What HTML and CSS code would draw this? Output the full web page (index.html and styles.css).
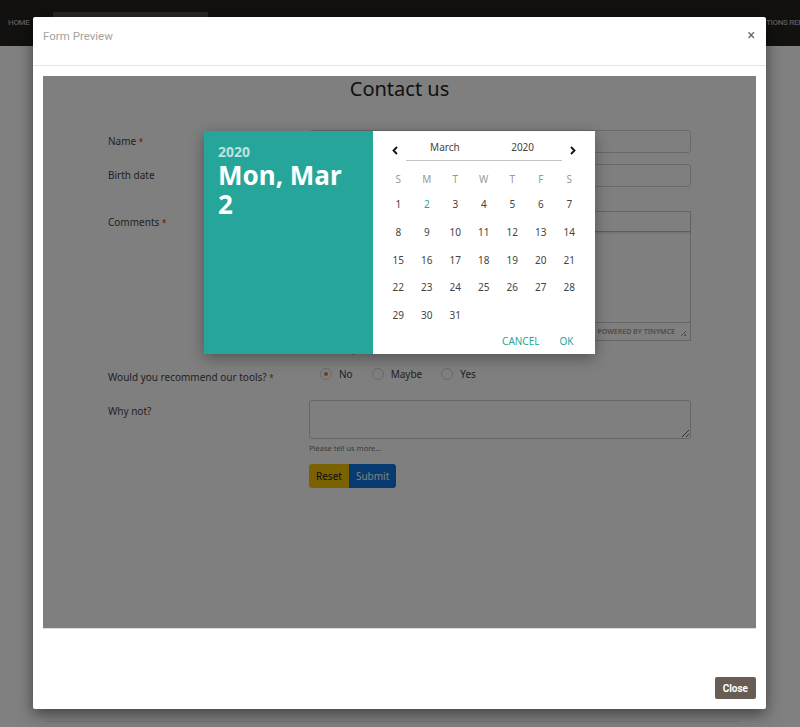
FILE: index.html
```html
<!DOCTYPE html>
<html lang="en">
<head>
    <meta charset="UTF-8">
    <meta name="viewport" content="width=device-width, initial-scale=1.0">
    <title>Form Preview</title>
    <link rel="stylesheet" href="styles.css">
</head>
<body>
    <header class="topnav">
      <a class="nav-link" href="#">Home</a>
      <div class="nav-search"></div>
      <a class="nav-link nav-link-end" href="#">Options Reference</a>
    </header>
    <main class="page"></main>

    <div class="modal">
      <div class="modal-header">
        <h4 class="modal-title">Form Preview</h4>
        <button class="modal-x" type="button">&times;</button>
      </div>
      <div class="modal-body">
        <div class="preview">
          <h2 class="form-title">Contact us</h2>
          <form class="form">
            <div class="row">
              <label class="label">Name <span class="req">*</span></label>
              <div class="field"><input class="input" type="text"></div>
            </div>
            <div class="row row-spaced">
              <label class="label">Birth date</label>
              <div class="field"><input class="input" type="text"></div>
            </div>
            <div class="row">
              <label class="label">Comments <span class="req">*</span></label>
              <div class="field">
                <div class="editor">
                  <div class="editor-toolbar"></div>
                  <div class="editor-body"></div>
                  <div class="editor-status">
                    <span>Powered by Tinymce</span>
                    <span class="grip"></span>
                  </div>
                </div>
                <p class="help">Tell us what you think</p>
              </div>
            </div>
            <div class="row">
              <label class="label">Would you recommend our tools? <span class="req">*</span></label>
              <div class="field">
                <div class="radios">
                  <span class="radio"><span class="dot checked"></span>No</span>
                  <span class="radio"><span class="dot"></span>Maybe</span>
                  <span class="radio"><span class="dot"></span>Yes</span>
                </div>
              </div>
            </div>
            <div class="row">
              <label class="label">Why not?</label>
              <div class="field">
                <textarea class="textarea"></textarea>
                <p class="help">Please tell us more...</p>
              </div>
            </div>
            <div class="row">
              <span></span>
              <div class="btn-group">
                <button class="btn btn-reset" type="reset">Reset</button>
                <button class="btn btn-submit" type="button">Submit</button>
              </div>
            </div>
          </form>

          <div class="picker-overlay"></div>
          <div class="picker">
            <div class="picker-date">
              <div class="picker-year">2020</div>
              <div class="picker-day">Mon, Mar 2</div>
            </div>
            <div class="picker-cal">
              <div class="cal-head">
                <span class="cal-nav">
                  <svg width="6" height="9" viewBox="0 0 6 9"><polyline points="5,1 1.5,4.5 5,8" fill="none" stroke="#111" stroke-width="1.8"/></svg>
                </span>
                <div class="cal-selects">
                  <span>March</span>
                  <span>2020</span>
                </div>
                <span class="cal-nav">
                  <svg width="6" height="9" viewBox="0 0 6 9"><polyline points="1,1 4.5,4.5 1,8" fill="none" stroke="#111" stroke-width="1.8"/></svg>
                </span>
              </div>
              <div class="cal-week">
                <span>S</span><span>M</span><span>T</span><span>W</span><span>T</span><span>F</span><span>S</span>
              </div>
              <div class="cal-days">
                <span>1</span><span class="today">2</span><span>3</span><span>4</span><span>5</span><span>6</span><span>7</span>
                <span>8</span><span>9</span><span>10</span><span>11</span><span>12</span><span>13</span><span>14</span>
                <span>15</span><span>16</span><span>17</span><span>18</span><span>19</span><span>20</span><span>21</span>
                <span>22</span><span>23</span><span>24</span><span>25</span><span>26</span><span>27</span><span>28</span>
                <span>29</span><span>30</span><span>31</span>
              </div>
              <div class="cal-foot">
                <button class="cal-btn" type="button">Cancel</button>
                <button class="cal-btn" type="button">Ok</button>
              </div>
            </div>
          </div>
        </div>
      </div>
      <div class="modal-footer">
        <button class="btn-close" type="button">Close</button>
      </div>
    </div>
</body>
</html>
```

FILE: styles.css
```css
html {
  box-sizing: border-box;
}

*,
*:before,
*:after {
  box-sizing: inherit;
}

body {
  margin: 0;
  height: 727px;
  overflow: hidden;
  background: #808080;
  font-family: "Noto Sans", "Open Sans", Arial, sans-serif;
}

button {
  font-family: inherit;
  border: 0;
  background: none;
  padding: 0;
  cursor: pointer;
}

/* page behind the modal (already dimmed by the backdrop) */
.topnav {
  height: 46px;
  background: #121110;
  display: flex;
  align-items: flex-start;
  padding-left: 8px;
  overflow: hidden;
}
.nav-link {
  margin-top: 18px;
  font-family: Roboto, sans-serif;
  font-size: 8px;
  font-weight: 500;
  letter-spacing: -0.3px;
  color: #5f5c5a;
  text-decoration: none;
  text-transform: uppercase;
  white-space: nowrap;
}
.nav-search {
  width: 155px;
  height: 30px;
  margin: 12px 0 0 23px;
  background: #2a2826;
}
.nav-link-end {
  margin-left: auto;
  margin-right: -30px;
}

.page {
  height: 676px;
  margin: 0 60px 0 45px;
  border-bottom: 1px solid #777;
}

/* modal */
.modal {
  position: absolute;
  top: 17px;
  left: 33px;
  width: 733px;
  height: 692px;
  background: #fff;
  border-radius: 2px;
  box-shadow: 0 5px 15px rgba(0, 0, 0, 0.5);
  display: flex;
  flex-direction: column;
}
.modal-header {
  height: 49px;
  padding: 10px 10px 0;
  border-bottom: 1px solid #e5e5e5;
  display: flex;
  justify-content: space-between;
  align-items: flex-start;
}
.modal-title {
  margin: 0;
  font-family: Roboto, sans-serif;
  font-size: 11.5px;
  font-weight: 400;
  line-height: 18px;
  color: #a6a29e;
}
.modal-x {
  font-family: Roboto, sans-serif;
  font-size: 14px;
  line-height: 16px;
  color: #666;
  margin-right: 1px;
}
.modal-body {
  padding: 10px;
}
.modal-footer {
  flex: 1;
  display: flex;
  justify-content: flex-end;
  align-items: flex-end;
  padding: 10px;
}
.btn-close {
  height: 22px;
  padding: 0 8px;
  border-radius: 2px;
  background: #675d55;
  color: #fff;
  font-family: Roboto, sans-serif;
  font-size: 10px;
  font-weight: 700;
}

/* form preview */
.preview {
  position: relative;
  height: 553px;
  background: #fff;
  border-bottom: 1px solid #ddd;
  overflow: hidden;
  color: #444;
}
.form-title {
  margin: 0 0 28px;
  text-align: center;
  font-size: 20px;
  font-weight: 400;
  line-height: 26px;
  color: #222;
}
.form {
  padding: 0 65px;
}
.row {
  display: grid;
  grid-template-columns: 201px 1fr;
  margin-bottom: 11px;
}
.row-spaced {
  margin-bottom: 24px;
}
.label {
  padding-top: 4px;
  font-size: 10px;
  line-height: 15px;
  color: #444;
}
.req {
  color: #d22;
  font-size: 8px;
  vertical-align: top;
}
.input {
  display: block;
  width: 100%;
  height: 23px;
  margin: 0;
  border: 1px solid #d4d4d4;
  border-radius: 3px;
}
.help {
  margin: 4px 0 0;
  font-size: 7.5px;
  line-height: 10px;
  color: #777;
}
.editor {
  height: 130px;
  border: 1px solid #ccc;
  display: flex;
  flex-direction: column;
}
.editor-toolbar {
  height: 20px;
  border-bottom: 1px solid #bbb;
  box-shadow: 0 1px 2px rgba(0, 0, 0, 0.15);
}
.editor-body {
  flex: 1;
}
.editor-status {
  height: 18px;
  border-top: 1px solid #ccc;
  display: flex;
  justify-content: flex-end;
  align-items: center;
  gap: 6px;
  padding-right: 4px;
  font-size: 7px;
  font-weight: 600;
  text-transform: uppercase;
  color: #999;
}
.grip {
  width: 5px;
  height: 5px;
  margin-top: 3px;
  background: linear-gradient(135deg, transparent 45%, #999 45%, #999 55%, transparent 55%, transparent 75%, #999 75%);
}
.radios {
  height: 23px;
  display: flex;
  align-items: flex-start;
  padding: 2px 0 0 11px;
  font-size: 10px;
  line-height: 12px;
  color: #444;
}
.radio {
  display: flex;
  align-items: center;
  gap: 7px;
  margin-right: 19px;
}
.dot {
  width: 12px;
  height: 12px;
  border: 1px solid #d6d6d6;
  border-radius: 50%;
  display: flex;
  align-items: center;
  justify-content: center;
}
.dot.checked:after {
  content: "";
  width: 4px;
  height: 4px;
  border-radius: 50%;
  background: #d08a2e;
}
.textarea {
  display: block;
  width: 100%;
  height: 39px;
  margin: 0;
  border: 1px solid #ccc;
  border-radius: 3px;
  font-family: inherit;
}
.btn-group {
  display: flex;
}
.btn {
  height: 24px;
  font-size: 10px;
  padding: 0 7px;
}
.btn-reset {
  background: #f5c400;
  color: #222;
  border-radius: 3px 0 0 3px;
}
.btn-submit {
  background: #0d74e0;
  color: #fff;
  border-radius: 0 3px 3px 0;
}

/* date picker on top of the preview */
.picker-overlay {
  position: absolute;
  top: 0;
  right: 0;
  bottom: 0;
  left: 0;
  background: rgba(0, 0, 0, 0.5);
}
.picker {
  position: absolute;
  top: 55px;
  left: 161px;
  width: 391px;
  height: 223px;
  display: flex;
  background: #fff;
  box-shadow: 0 4px 14px rgba(0, 0, 0, 0.35);
}
.picker-date {
  width: 169px;
  padding: 11px 14px;
  background: #26a69a;
  color: #fff;
}
.picker-year {
  font-size: 14px;
  font-weight: 700;
  line-height: 19px;
  color: rgba(255, 255, 255, 0.7);
}
.picker-day {
  font-size: 26px;
  font-weight: 700;
  line-height: 29px;
}
.picker-cal {
  flex: 1;
  padding: 6px 11.5px 0 11px;
  font-size: 10px;
  color: #444;
}
.cal-head {
  display: flex;
  height: 24px;
}
.cal-nav {
  width: 22px;
  display: flex;
  align-items: center;
  justify-content: center;
  padding-top: 2px;
}
.cal-selects {
  flex: 1;
  display: flex;
  border-bottom: 1px solid #c4c4c4;
}
.cal-selects span {
  flex: 1;
  text-align: center;
  line-height: 20px;
}
.cal-week,
.cal-days {
  display: grid;
  grid-template-columns: repeat(7, 28.5px);
  text-align: center;
}
.cal-week {
  margin-top: 6px;
  grid-auto-rows: 24px;
  line-height: 24px;
  color: #999;
}
.cal-days {
  grid-auto-rows: 27.75px;
  line-height: 27.75px;
}
.cal-days .today {
  color: #26a69a;
}
.cal-foot {
  display: flex;
  justify-content: flex-end;
}
.cal-btn {
  height: 22px;
  padding: 0 10px;
  font-size: 10px;
  text-transform: uppercase;
  color: #26a69a;
}
```
